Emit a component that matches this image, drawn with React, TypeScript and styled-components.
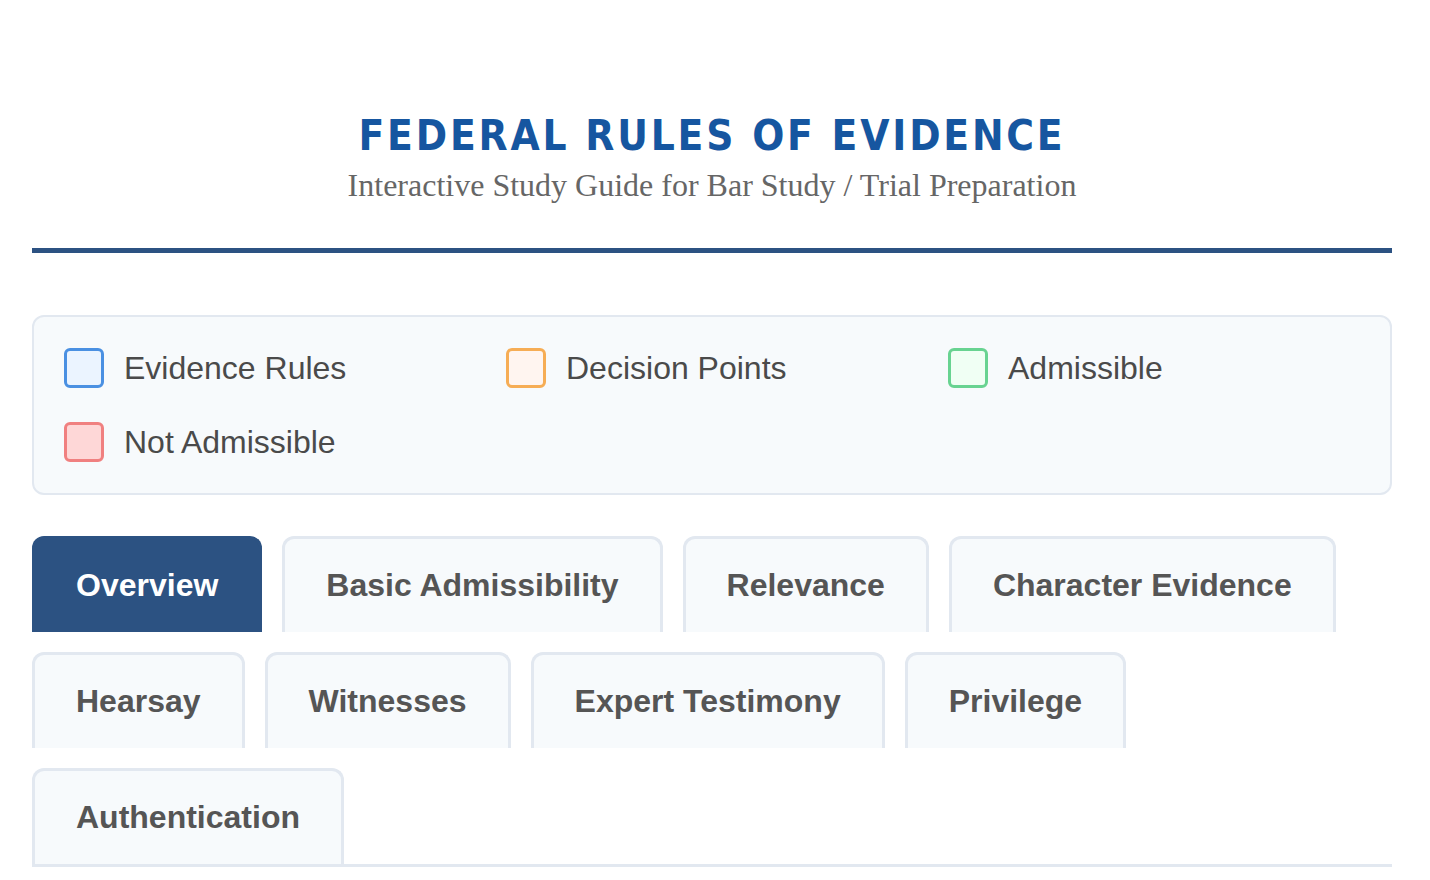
import React, { useState } from 'react';
import styled, { createGlobalStyle } from 'styled-components';

const GlobalStyle = createGlobalStyle`
  body {
    margin: 0;
    background: #ffffff;
    font-family: 'Liberation Sans', Arial, sans-serif;
  }
`;

const Page = styled.div`
  width: 1360px;
  margin-left: 32px;
  padding-top: 106px;
`;

const Header = styled.header`
  text-align: center;
  padding-bottom: 43px;
  border-bottom: 5px solid #2c5282;
`;

const Title = styled.h1`
  margin: 0;
  font-family: 'DejaVu Sans Condensed', 'Liberation Sans', sans-serif;
  font-weight: 700;
  font-size: 42px;
  line-height: 60px;
  letter-spacing: 2.8px;
  color: #1656a0;
`;

const Subtitle = styled.p`
  margin: -1px 0 0;
  font-family: 'Liberation Serif', serif;
  font-size: 32px;
  line-height: 40px;
  color: #666666;
`;

const Legend = styled.div`
  margin-top: 62px;
  padding: 29px 30px;
  border: 2px solid #e2e8f0;
  border-radius: 12px;
  background: #f7fafc;
  display: grid;
  grid-template-columns: repeat(3, 1fr);
  gap: 30px;
`;

const LegendItem = styled.div`
  display: flex;
  align-items: center;
  gap: 20px;
  height: 44px;
  font-size: 32px;
  color: #4a4a4a;
`;

const Swatch = styled.span<{ $border: string; $fill: string }>`
  width: 40px;
  height: 40px;
  box-sizing: border-box;
  border: 3px solid ${(p) => p.$border};
  background: ${(p) => p.$fill};
  border-radius: 6px;
  flex-shrink: 0;
`;

const Tabs = styled.nav`
  margin-top: 41px;
  display: flex;
  flex-wrap: wrap;
  gap: 20px;
  border-bottom: 3px solid #e2e8f0;
`;

const Tab = styled.button<{ $active?: boolean }>`
  padding: 28px 41px;
  border: 3px solid ${(p) => (p.$active ? '#2c5282' : '#e2e8f0')};
  border-bottom: none;
  border-radius: 12px 12px 0 0;
  background: ${(p) => (p.$active ? '#2c5282' : '#f7fafc')};
  color: ${(p) => (p.$active ? '#ffffff' : '#555555')};
  font-family: 'Liberation Sans', Arial, sans-serif;
  font-weight: 700;
  font-size: 32px;
  line-height: 37px;
  cursor: pointer;
`;

const legend = [
  { label: 'Evidence Rules', border: '#4a90e2', fill: '#ebf4ff' },
  { label: 'Decision Points', border: '#f6ad55', fill: '#fff5f0' },
  { label: 'Admissible', border: '#68d391', fill: '#f0fff4' },
  { label: 'Not Admissible', border: '#f08080', fill: '#fed7d7' },
];

const tabs = [
  'Overview',
  'Basic Admissibility',
  'Relevance',
  'Character Evidence',
  'Hearsay',
  'Witnesses',
  'Expert Testimony',
  'Privilege',
  'Authentication',
];

export default function App() {
  const [active, setActive] = useState('Overview');

  return (
    <>
      <GlobalStyle />
      <Page>
        <Header>
          <Title>FEDERAL RULES OF EVIDENCE</Title>
          <Subtitle>Interactive Study Guide for Bar Study / Trial Preparation</Subtitle>
        </Header>
        <Legend>
          {legend.map((l) => (
            <LegendItem key={l.label}>
              <Swatch $border={l.border} $fill={l.fill} />
              {l.label}
            </LegendItem>
          ))}
        </Legend>
        <Tabs>
          {tabs.map((t) => (
            <Tab key={t} $active={t === active} onClick={() => setActive(t)}>
              {t}
            </Tab>
          ))}
        </Tabs>
      </Page>
    </>
  );
}
